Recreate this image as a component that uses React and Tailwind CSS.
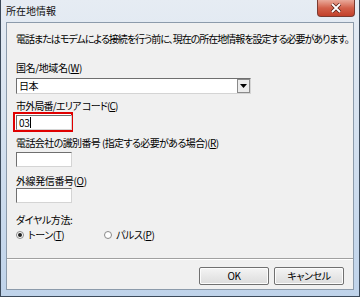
import { useState } from 'react';

const jp = "font-['Noto_Sans_CJK_JP','Noto_Sans',sans-serif] [font-feature-settings:'palt']";

function TextBox({ value, caret }) {
  return (
    <div className="w-[56px] h-[15px] bg-white border border-t-[#6f6f6f] border-l-[#6f6f6f] border-r-[#d4d4d4] border-b-[#d4d4d4] flex items-center pl-[2px] text-[10px] leading-[12px]">
      {value}
      {caret && <span className="w-px h-[11px] bg-black ml-px" />}
    </div>
  );
}

function Radio({ checked, label, className }) {
  return (
    <div className={`flex items-center gap-[4px] ${className || ''}`}>
      <span className="w-[8px] h-[8px] rounded-full border border-[#8a8a8a] bg-white flex items-center justify-center">
        {checked && <span className="w-[4px] h-[4px] rounded-full bg-[#222]" />}
      </span>
      <span>{label}</span>
    </div>
  );
}

function Button({ children }) {
  return (
    <button className="w-[70px] h-[18px] border border-[#707070] rounded-[2px] bg-gradient-to-b from-[#f4f4f4] to-[#dcdcdc] text-[10px] leading-[12px] shadow-[inset_0_0_0_1px_#fcfcfc]">
      {children}
    </button>
  );
}

export default function App() {
  const [tone, setTone] = useState(true);

  return (
    <div className={`w-[360px] h-[297px] overflow-hidden bg-gradient-to-b from-[#e6ecf3] to-[#bfd3ea] border-l border-r border-[#3c4a5a] flex flex-col text-black ${jp}`}>
      {/* title bar */}
      <div className="h-[22px] flex justify-between items-start pl-[5px] pr-[4px]">
        <span className="text-[10px] leading-[12px] mt-[5px] text-[#111]">所在地情報</span>
        <div className="w-[38px] h-[17px] rounded-b-[4px] border border-t-0 border-[#7a3a30] bg-gradient-to-b from-[#e9a99a] via-[#d2604a] to-[#c2402a] flex items-center justify-center">
          <svg width="12" height="10" viewBox="0 0 12 10">
            <path d="M2 1 L10 9 M10 1 L2 9" stroke="#5a2018" strokeWidth="3.4" />
            <path d="M2 1 L10 9 M10 1 L2 9" stroke="#ffffff" strokeWidth="1.8" />
          </svg>
        </div>
      </div>

      {/* client area */}
      <div className="mx-[5px] h-[268px] bg-[#f0f0f0] border border-[#8c9bab] flex flex-col text-[10px] leading-[12px] tracking-[-0.4px]">
        <div className="px-[9px] flex flex-col">
          <p className="mt-[10px] whitespace-nowrap tracking-[-1px]">電話またはモデムによる接続を行う前に、現在の所在地情報を設定する必要があります。</p>

          <p className="mt-[17px]">国名/地域名(<u>W</u>)</p>
          <div className="mt-[4px] w-[235px] h-[16px] bg-white border border-t-[#6f6f6f] border-l-[#6f6f6f] border-r-[#d4d4d4] border-b-[#d4d4d4] flex items-center justify-between pl-[2px]">
            <span>日本</span>
            <span className="w-[13px] h-[14px] bg-[#ececec] border border-[#8a8a8a] flex items-center justify-center">
              <svg width="7" height="4" viewBox="0 0 7 4">
                <path d="M0 0 H7 L3.5 4 Z" fill="#000" />
              </svg>
            </span>
          </div>

          <p className="mt-[6px] whitespace-nowrap tracking-[-0.8px]">市外局番/エリア コード(<u>C</u>)</p>
          <div className="-ml-[3px] w-[60px] h-[20px] border-2 border-[#e00000] bg-white p-px">
            <TextBox value="03" caret />
          </div>

          <p className="mt-[5px] whitespace-nowrap tracking-[-0.6px]">電話会社の識別番号 (指定する必要がある場合)(<u>R</u>)</p>
          <div className="mt-[3px]">
            <TextBox value="" />
          </div>

          <p className="mt-[8px]">外線発信番号(<u>O</u>)</p>
          <div className="mt-px">
            <TextBox value="" />
          </div>

          <p className="mt-[11px]">ダイヤル方法:</p>
          <div className="mt-[3px] flex items-center" onClick={() => setTone(!tone)}>
            <Radio checked={tone} label={<>トーン(<u>T</u>)</>} className="w-[88px]" />
            <Radio checked={!tone} label={<>パルス(<u>P</u>)</>} />
          </div>
        </div>

        <div className="mt-[17px] h-px bg-[#a0a0a0] shadow-[0_1px_0_#ffffff]" />

        <div className="mt-[8px] px-[9px] flex justify-end gap-[5px]">
          <Button>OK</Button>
          <Button>キャンセル</Button>
        </div>
      </div>

      <div className="flex-1 border-b border-[#3c4a5a]" />
    </div>
  );
}
